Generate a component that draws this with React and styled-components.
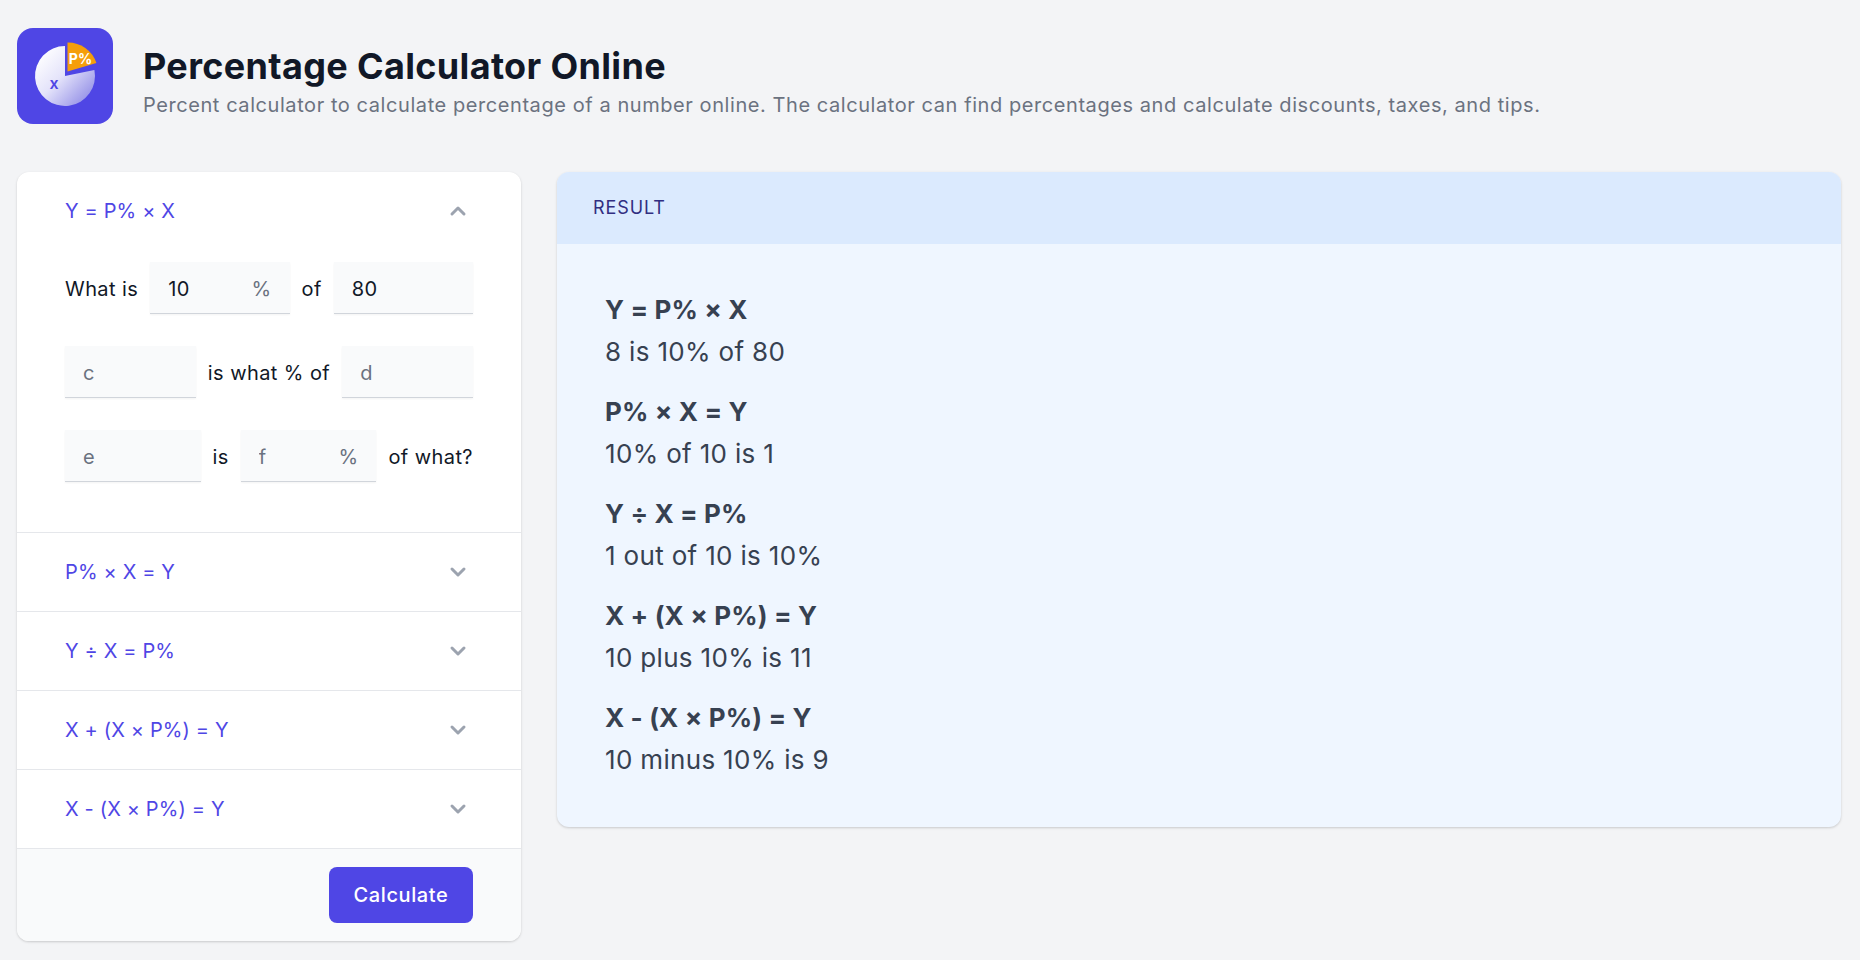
import React from "react";
import styled, { createGlobalStyle } from "styled-components";

const Global = createGlobalStyle`
  html, body { margin: 0; padding: 0; background: #f3f4f6; }
  body { font-family: Inter, "Noto Sans", sans-serif; color: #111827; }
  * { box-sizing: border-box; }
`;

const Page = styled.div`
  min-height: 960px;
  padding: 28px 17px 0;
`;
const Header = styled.header`
  display: flex;
  align-items: flex-start;
  gap: 30px;
  margin-bottom: 48px;
`;
const LogoBox = styled.div`
  width: 96px;
  height: 96px;
  flex: none;
  border-radius: 16px;
  background: #4f46e5;
`;
const Logo = styled.svg`
  display: block;
  width: 96px;
  height: 96px;
`;
const HeaderText = styled.div`
  display: flex;
  flex-direction: column;
  padding-top: 18px;
`;
const Title = styled.h1`
  margin: 0;
  font-size: 36px;
  line-height: 40px;
  font-weight: 700;
  letter-spacing: 0.34px;
  color: #111827;
`;
const Subtitle = styled.p`
  margin: 0;
  padding-top: 5px;
  font-size: 20px;
  line-height: 28px;
  letter-spacing: 0.57px;
  color: #6b7280;
`;
const Columns = styled.main`
  display: grid;
  grid-template-columns: 504px 1284px;
  gap: 36px;
  align-items: start;
`;
const Card = styled.section`
  background: #fff;
  border-radius: 12px;
  box-shadow: 0 1px 3px rgba(0, 0, 0, 0.12), 0 1px 2px rgba(0, 0, 0, 0.06);
  overflow: hidden;
`;
const Item = styled.div`
  border-bottom: 1px solid #e5e7eb;
`;
const ItemHeader = styled.div`
  height: 78px;
  padding: 0 48px;
  display: flex;
  align-items: center;
  justify-content: space-between;
  font-size: 20px;
  letter-spacing: 0.15px;
  color: #4f46e5;
`;
const Chevron = styled.svg`
  width: 24px;
  height: 24px;
  margin-right: 3px;
  color: #9ca3af;
  transform: ${(p) => (p.$up ? "rotate(180deg)" : "none")};
`;
const Panel = styled.div`
  padding: 12px 48px 50px;
  display: flex;
  flex-direction: column;
  gap: 32px;
`;
const Row = styled.div`
  display: flex;
  align-items: center;
  gap: 12px;
  font-size: 20px;
  letter-spacing: 0.42px;
  color: #111827;
  white-space: nowrap;
`;
const Label = styled.span`
  padding-top: 2px;
`;
const Field = styled.div`
  position: relative;
  flex: 1 1 0;
  min-width: 0;
`;
const Input = styled.input`
  display: block;
  width: 100%;
  height: 52px;
  padding: 2px 18px 0;
  border: 0;
  border-bottom: 1px solid #d1d5db;
  background: #f9fafb;
  box-shadow: 0 1px 2px rgba(0, 0, 0, 0.05);
  font: inherit;
  letter-spacing: 0.42px;
  color: #111827;
  outline: none;
  &::placeholder { color: #6b7280; opacity: 1; }
`;
const Suffix = styled.span`
  position: absolute;
  right: 18px;
  top: 50%;
  transform: translateY(-50%);
  padding-top: 2px;
  color: #6b7280;
`;
const Footer = styled.div`
  background: #f9fafb;
  padding: 18px 48px;
  display: flex;
  justify-content: flex-end;
`;
const Button = styled.button`
  width: 144px;
  height: 56px;
  border: 0;
  border-radius: 8px;
  background: #4f46e5;
  color: #fff;
  font: 500 20px Inter, sans-serif;
  letter-spacing: 0.6px;
`;
const ResultCard = styled(Card)`
  background: #eff6ff;
`;
const ResultHeader = styled.div`
  height: 72px;
  padding: 0 36px 2px;
  display: flex;
  align-items: center;
  background: #dbeafe;
  font-size: 18px;
  letter-spacing: 0.9px;
  color: #312e81;
`;
const ResultBody = styled.div`
  padding: 46px 48px 48px;
  display: flex;
  flex-direction: column;
  gap: 21px;
  font-size: 26px;
  line-height: 39px;
  letter-spacing: 0.33px;
  color: #374151;
`;
const Result = styled.div``;
const ResultName = styled.div`
  font-weight: 700;
  letter-spacing: 0.12px;
  margin-bottom: 3px;
`;

const Down = ({ up }) => (
  <Chevron $up={up} viewBox="0 0 24 24" fill="none" stroke="currentColor" strokeWidth="3" strokeLinecap="round" strokeLinejoin="round">
    <path d="M6 9l6 6 6-6" />
  </Chevron>
);

const LogoArt = () => (
  <Logo viewBox="0 0 96 96">
    <defs>
      <linearGradient id="pie" x1="0.1" y1="0.1" x2="0.95" y2="0.9">
        <stop offset="0" stopColor="#ffffff" />
        <stop offset="0.45" stopColor="#e4e3fa" />
        <stop offset="1" stopColor="#8f8be6" />
      </linearGradient>
    </defs>
    <path d="M48 48V18A30 30 0 1 0 77.4 42Z" fill="url(#pie)" />
    <path d="M50.5 43.5V14.5A30 30 0 0 1 79.4 35Z" fill="#f59e0b" />
    <text x="63.5" y="36" textAnchor="middle" fontFamily="Inter, sans-serif" fontSize="14" fontWeight="700" fill="#fff">P%</text>
    <text x="37" y="61" textAnchor="middle" fontFamily="Inter, sans-serif" fontSize="16" fontWeight="600" fill="#4f46e5">x</text>
  </Logo>
);

const collapsed = ["P% × X = Y", "Y ÷ X = P%", "X + (X × P%) = Y", "X - (X × P%) = Y"];
const results = [
  ["Y = P% × X", "8 is 10% of 80"],
  ["P% × X = Y", "10% of 10 is 1"],
  ["Y ÷ X = P%", "1 out of 10 is 10%"],
  ["X + (X × P%) = Y", "10 plus 10% is 11"],
  ["X - (X × P%) = Y", "10 minus 10% is 9"],
];

export default function App() {
  return (
    <Page>
      <Global />
      <Header>
        <LogoBox><LogoArt /></LogoBox>
        <HeaderText>
          <Title>Percentage Calculator Online</Title>
          <Subtitle>Percent calculator to calculate percentage of a number online. The calculator can find percentages and calculate discounts, taxes, and tips.</Subtitle>
        </HeaderText>
      </Header>
      <Columns>
        <Card>
          <Item>
            <ItemHeader>Y = P% × X<Down up /></ItemHeader>
            <Panel>
              <Row>
                <Label>What is</Label>
                <Field><Input defaultValue="10" /><Suffix>%</Suffix></Field>
                <Label>of</Label>
                <Field><Input defaultValue="80" /></Field>
              </Row>
              <Row>
                <Field><Input placeholder="c" /></Field>
                <Label>is what % of</Label>
                <Field><Input placeholder="d" /></Field>
              </Row>
              <Row>
                <Field><Input placeholder="e" /></Field>
                <Label>is</Label>
                <Field><Input placeholder="f" /><Suffix>%</Suffix></Field>
                <Label>of what?</Label>
              </Row>
            </Panel>
          </Item>
          {collapsed.map((t) => (
            <Item key={t}>
              <ItemHeader>{t}<Down /></ItemHeader>
            </Item>
          ))}
          <Footer><Button>Calculate</Button></Footer>
        </Card>
        <ResultCard>
          <ResultHeader>RESULT</ResultHeader>
          <ResultBody>
            {results.map(([name, text]) => (
              <Result key={name}>
                <ResultName>{name}</ResultName>
                {text}
              </Result>
            ))}
          </ResultBody>
        </ResultCard>
      </Columns>
    </Page>
  );
}
